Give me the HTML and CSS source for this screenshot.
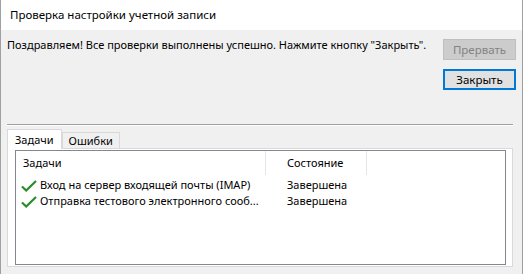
FILE: index.html
```html
<!DOCTYPE html>
<html lang="ru">
<head>
<meta charset="utf-8">
<title>Проверка настройки учетной записи</title>
<link rel="stylesheet" href="styles.css">
</head>
<body>
<div class="window">
  <div class="titlebar">Проверка настройки учетной записи</div>
  <div class="body">
    <div class="top">
      <div class="message">Поздравляем! Все проверки выполнены успешно. Нажмите кнопку "Закрыть".</div>
      <div class="buttons">
        <button class="btn disabled" disabled>Прервать</button>
        <button class="btn default">Закрыть</button>
      </div>
    </div>
    <div class="separator"></div>
    <div class="tabs">
      <div class="tab active">Задачи</div>
      <div class="tab">Ошибки</div>
    </div>
    <div class="tabpage">
      <div class="listbox">
        <div class="header">
          <div class="col c1">Задачи</div>
          <div class="col c2">Состояние</div>
          <div class="col c3"></div>
        </div>
        <div class="row">
          <div class="cell c1"><svg class="check" width="16" height="12" viewBox="0 0 16 12"><path d="M1 6.5 L5.2 10.5 L15 1" fill="none" stroke="#2b8a2b" stroke-width="2.2"/></svg><span class="txt">Вход на сервер входящей почты (IMAP)</span></div>
          <div class="cell c2">Завершена</div>
        </div>
        <div class="row">
          <div class="cell c1"><svg class="check" width="16" height="12" viewBox="0 0 16 12"><path d="M1 6.5 L5.2 10.5 L15 1" fill="none" stroke="#2b8a2b" stroke-width="2.2"/></svg><span class="txt">Отправка тестового электронного сооб...</span></div>
          <div class="cell c2">Завершена</div>
        </div>
      </div>
    </div>
  </div>
</div>
</body>
</html>
```

FILE: styles.css
```css
* { box-sizing: border-box; }
html, body { margin: 0; padding: 0; }
body {
  width: 523px;
  height: 274px;
  overflow: hidden;
  background: #f0f0f0;
  font-family: "Noto Sans", "Open Sans", sans-serif;
  font-size: 11px;
  color: #000;
}
.window {
  width: 523px;
  height: 274px;
  border-right: 1px solid #a0a0a0;
  border-left: 1px solid #a0a0a0;
  background: #f0f0f0;
}
.titlebar {
  height: 30px;
  background: #fff;
  padding-left: 9px;
  padding-top: 7px;
  font-size: 11.5px;
  line-height: 16px;
}
.body {
  padding: 0 8px 0 6px;
}
.top {
  display: flex;
  justify-content: space-between;
  height: 94px;
}
.message {
  padding-top: 7px;
  line-height: 16px;
  white-space: nowrap;
}
.buttons {
  display: flex;
  flex-direction: column;
  gap: 9px;
  padding-top: 9px;
  margin-right: -2px;
}
.btn {
  width: 73px;
  height: 21px;
  font-family: inherit;
  font-size: 11.5px;
  padding: 0;
  line-height: 17px;
}
.btn.disabled {
  background: #cccccc;
  border: 1px solid #bfbfbf;
  color: #838383;
}
.btn.default {
  background: #e1e1e1;
  border: 2px solid #0078d7;
  color: #000;
}
.separator {
  background: #a0a0a0;
  margin-right: 1px;
  border-bottom: 1px solid #fff;
  height: 2px;
}
.tabs {
  display: flex;
  margin-top: 3px;
  height: 19px;
  align-items: flex-end;
}
.tab {
  border: 1px solid #d9d9d9;
  border-bottom: none;
  height: 16px;
  padding: 0 6px;
  line-height: 15px;
  background: #f0f0f0;
}
.tab.active {
  height: 20px;
  background: #fff;
  padding: 2px 7px 0 7px;
  position: relative;
  z-index: 1;
  margin-bottom: -1px;
}
.tabpage {
  background: #fff;
  border: 1px solid #d9d9d9;
  margin-right: 1px;
  height: 119px;
  padding: 1px 6px 1px 7px;
}
.listbox {
  border: 1px solid #828790;
  height: 115px;
  background: #fff;
}
.header {
  display: flex;
  height: 26px;
  line-height: 24px;
}
.header .col {
  border-right: 1px solid #e5e5e5;
  height: 24px;
}
.c1 { width: 250px; padding-left: 7px; }
.c2 { width: 101px; padding-left: 21px; }
.header .c3 { border: none; }
.row {
  display: flex;
  height: 16px;
  line-height: 16px;
}
.row .c1 { display: flex; align-items: center; padding-left: 5px; white-space: nowrap; }
.check { flex: none; margin-right: 3px; margin-top: 1px; }
.row .c2 { padding-left: 21px; }
```
